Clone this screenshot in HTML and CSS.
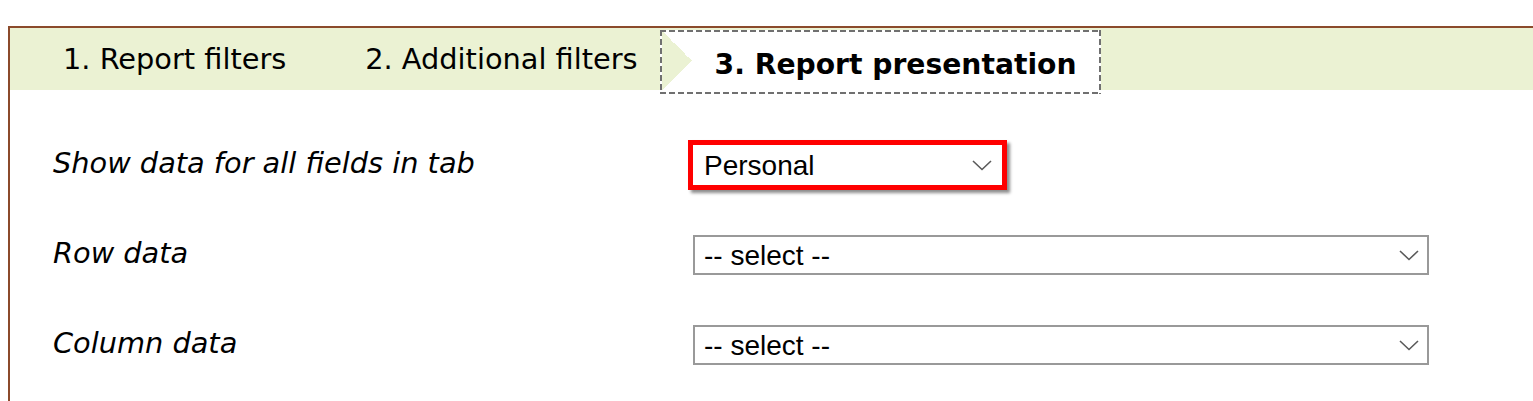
FILE: index.html
```html
<!DOCTYPE html>
<html lang="en">
<head>
<meta charset="utf-8">
<title>Report presentation</title>
<link rel="stylesheet" href="styles.css">
</head>
<body>
<div class="panel">
  <div class="tabbar">
    <div class="tab tab-first">1. Report filters</div>
    <div class="tab tab-second">2. Additional filters</div>
    <div class="tab tab-active">3. Report presentation</div>
  </div>
  <div class="form">
    <div class="row">
      <label class="label">Show data for all fields in tab</label>
      <span class="select-wrap select-highlight">
        <select class="select select-short">
          <option>Personal</option>
        </select>
        <svg class="chevron" width="20" height="11" viewBox="0 0 20 11"><path d="M1 1 L10 9.5 L19 1" fill="none" stroke="#5a5a5a" stroke-width="1.6"/></svg>
      </span>
    </div>
    <div class="row">
      <label class="label">Row data</label>
      <span class="select-wrap">
        <select class="select select-long">
          <option>-- select --</option>
        </select>
        <svg class="chevron" width="20" height="11" viewBox="0 0 20 11"><path d="M1 1 L10 9.5 L19 1" fill="none" stroke="#5a5a5a" stroke-width="1.6"/></svg>
      </span>
    </div>
    <div class="row">
      <label class="label">Column data</label>
      <span class="select-wrap">
        <select class="select select-long">
          <option>-- select --</option>
        </select>
        <svg class="chevron" width="20" height="11" viewBox="0 0 20 11"><path d="M1 1 L10 9.5 L19 1" fill="none" stroke="#5a5a5a" stroke-width="1.6"/></svg>
      </span>
    </div>
  </div>
</div>
</body>
</html>
```

FILE: styles.css
```css
html, body {
  margin: 0;
  padding: 0;
  background: #ffffff;
}

body {
  padding: 26px 0 0 8px;
  font-family: "DejaVu Sans", Verdana, sans-serif;
  color: #000;
  overflow: hidden;
}

.panel {
  border-top: 2px solid #8b4a2b;
  border-left: 2px solid #8b4a2b;
  height: 373px;
}

.tabbar {
  display: flex;
  align-items: flex-start;
  height: 62px;
  background: #ebf2d3;
}

.tab {
  font-size: 28.8px;
  line-height: 62px;
  white-space: nowrap;
}

.tab-first {
  padding-left: 53px;
}

.tab-second {
  margin-left: 79px;
}

.tab-active {
  margin-left: 22px;
  margin-top: 2px;
  height: 54px;
  padding: 6px 22px 0 53px;
  line-height: 54px;
  font-size: 28.2px;
  font-weight: bold;
  border: 2px solid transparent;
  background:
    repeating-linear-gradient(90deg, #707070 0 6px, transparent 6px 9px) left top / 100% 2px no-repeat,
    repeating-linear-gradient(90deg, #707070 0 6px, transparent 6px 9px) left bottom / 100% 2px no-repeat,
    repeating-linear-gradient(180deg, #707070 0 6px, transparent 6px 9px) left top / 2px 100% no-repeat,
    repeating-linear-gradient(180deg, #707070 0 6px, transparent 6px 9px) right top / 2px 100% no-repeat,
    linear-gradient(to top right, #ebf2d3 50%, transparent 50%) 2px 1px / 30px 30px no-repeat,
    linear-gradient(to bottom right, #ebf2d3 50%, transparent 50%) 2px 31px / 30px 29px no-repeat,
    #fff;
  background-origin: border-box;
  background-clip: border-box;
}

.form {
  padding: 30px 0 0 43px;
}

.row {
  display: grid;
  grid-template-columns: 640px auto;
  align-items: center;
  justify-content: start;
  height: 90px;
}

.label {
  font-style: italic;
  font-size: 28.8px;
  padding-bottom: 5px;
}

.select-wrap {
  position: relative;
  display: inline-block;
}

.select-highlight {
  box-shadow: 0 0 0 5px #ff0000, 3px 3px 3px 5px rgba(0, 0, 0, 0.45);
}

.select {
  -webkit-appearance: none;
  appearance: none;
  display: block;
  box-sizing: border-box;
  height: 40px;
  margin: 0;
  padding: 0 40px 0 9px;
  font-family: "Liberation Sans", Arial, sans-serif;
  font-size: 28px;
  color: #000;
  background: #fff;
  border: 2px solid #999;
  border-radius: 0;
}

.select-short {
  width: 309px;
  border-color: #fff;
}

.select-long {
  width: 736px;
}

.chevron {
  position: absolute;
  right: 10px;
  top: 15px;
  pointer-events: none;
}
```
